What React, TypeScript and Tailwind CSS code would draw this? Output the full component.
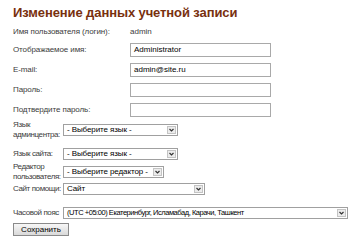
const font = "font-['Liberation_Sans',Arial,sans-serif]";

function TextBox({ value }: { value?: string }) {
  return (
    <div className="flex h-[14px] w-[141px] items-center border border-[#a9a9a9] bg-white px-[3px] text-[8px] leading-none text-black">
      {value}
    </div>
  );
}

function Select({ value, width, small }: { value: string; width: string; small?: boolean }) {
  return (
    <div className={`flex h-[12px] items-stretch border border-[#a0a0a0] bg-white ${width}`}>
      <div
        className={`flex flex-1 items-center overflow-hidden whitespace-nowrap px-[3px] leading-none text-black ${
          small ? "text-[7.5px] tracking-[-0.45px]" : "text-[8px] tracking-[-0.1px]"
        }`}
      >
        {value}
      </div>
      <div className="m-px flex w-[9px] items-center justify-center border border-[#c4c4c4] bg-[#ececec]">
        <svg width="5" height="4" viewBox="0 0 5 4">
          <path d="M0.5 1 L2.5 3 L4.5 1" fill="none" stroke="#333" strokeWidth="1.2" />
        </svg>
      </div>
    </div>
  );
}

function Row({ label, children }: { label: string; children: React.ReactNode }) {
  return (
    <div className="grid h-[14px] grid-cols-[117px_1fr] items-center">
      <span className="whitespace-nowrap text-[8px] leading-none tracking-[-0.1px] text-[#3c3c3c]">{label}</span>
      {children}
    </div>
  );
}

function SelRow({ label, children, className = "" }: { label: React.ReactNode; children: React.ReactNode; className?: string }) {
  return (
    <div className={`grid grid-cols-[50px_1fr] items-center ${className}`}>
      <span className="whitespace-nowrap text-[8px] leading-[10px] tracking-[-0.4px] text-[#3c3c3c]">{label}</span>
      {children}
    </div>
  );
}

export default function App() {
  return (
    <div className={`${font} min-h-[241px] w-[349px] bg-white pl-[13px] pt-[3px]`}>
      <h1 className="text-[13px] font-bold leading-[20px] tracking-[-0.1px] text-[#78300e]">
        Изменение данных учетной записи
      </h1>
      <div className="mt-[2px] flex flex-col gap-[6px]">
        <Row label="Имя пользователя (логин):">
          <span className="text-[8px] leading-none text-[#3c3c3c]">admin</span>
        </Row>
        <div className="-mt-[2px]">
          <Row label="Отображаемое имя:">
            <TextBox value="Administrator" />
          </Row>
        </div>
        <Row label="E-mail:">
          <TextBox value="admin@site.ru" />
        </Row>
        <Row label="Пароль:">
          <TextBox />
        </Row>
        <Row label="Подтвердите пароль:">
          <TextBox />
        </Row>
      </div>
      <div className="mt-[3px] flex flex-col">
        <SelRow label={<>Язык<br />админцентра:</>} className="h-[20px]">
          <Select value="- Выберите язык -" width="w-[115px]" />
        </SelRow>
        <SelRow label="Язык сайта:" className="mt-[7px] h-[13px]">
          <Select value="- Выберите язык -" width="w-[115px]" />
        </SelRow>
        <SelRow label={<>Редактор<br />пользователя:</>} className="mt-[2px] h-[20px]">
          <Select value="- Выберите редактор -" width="w-[101px]" />
        </SelRow>
        <SelRow label="Сайт помощи:" className="mt-px h-[12px]">
          <Select value="Сайт" width="w-[142px]" />
        </SelRow>
        <SelRow label="Часовой пояс" className="mt-[12px] h-[12px]">
          <Select value="(UTC +05:00) Екатеринбург, Исламабад, Карачи, Ташкент" width="w-[285px]" small />
        </SelRow>
      </div>
      <button className="mt-[4px] block h-[13px] w-[56px] border border-[#8a8a8a] bg-[linear-gradient(#f7f7f7,#d9d9d9)] text-[8px] leading-none text-black">
        Сохранить
      </button>
    </div>
  );
}
